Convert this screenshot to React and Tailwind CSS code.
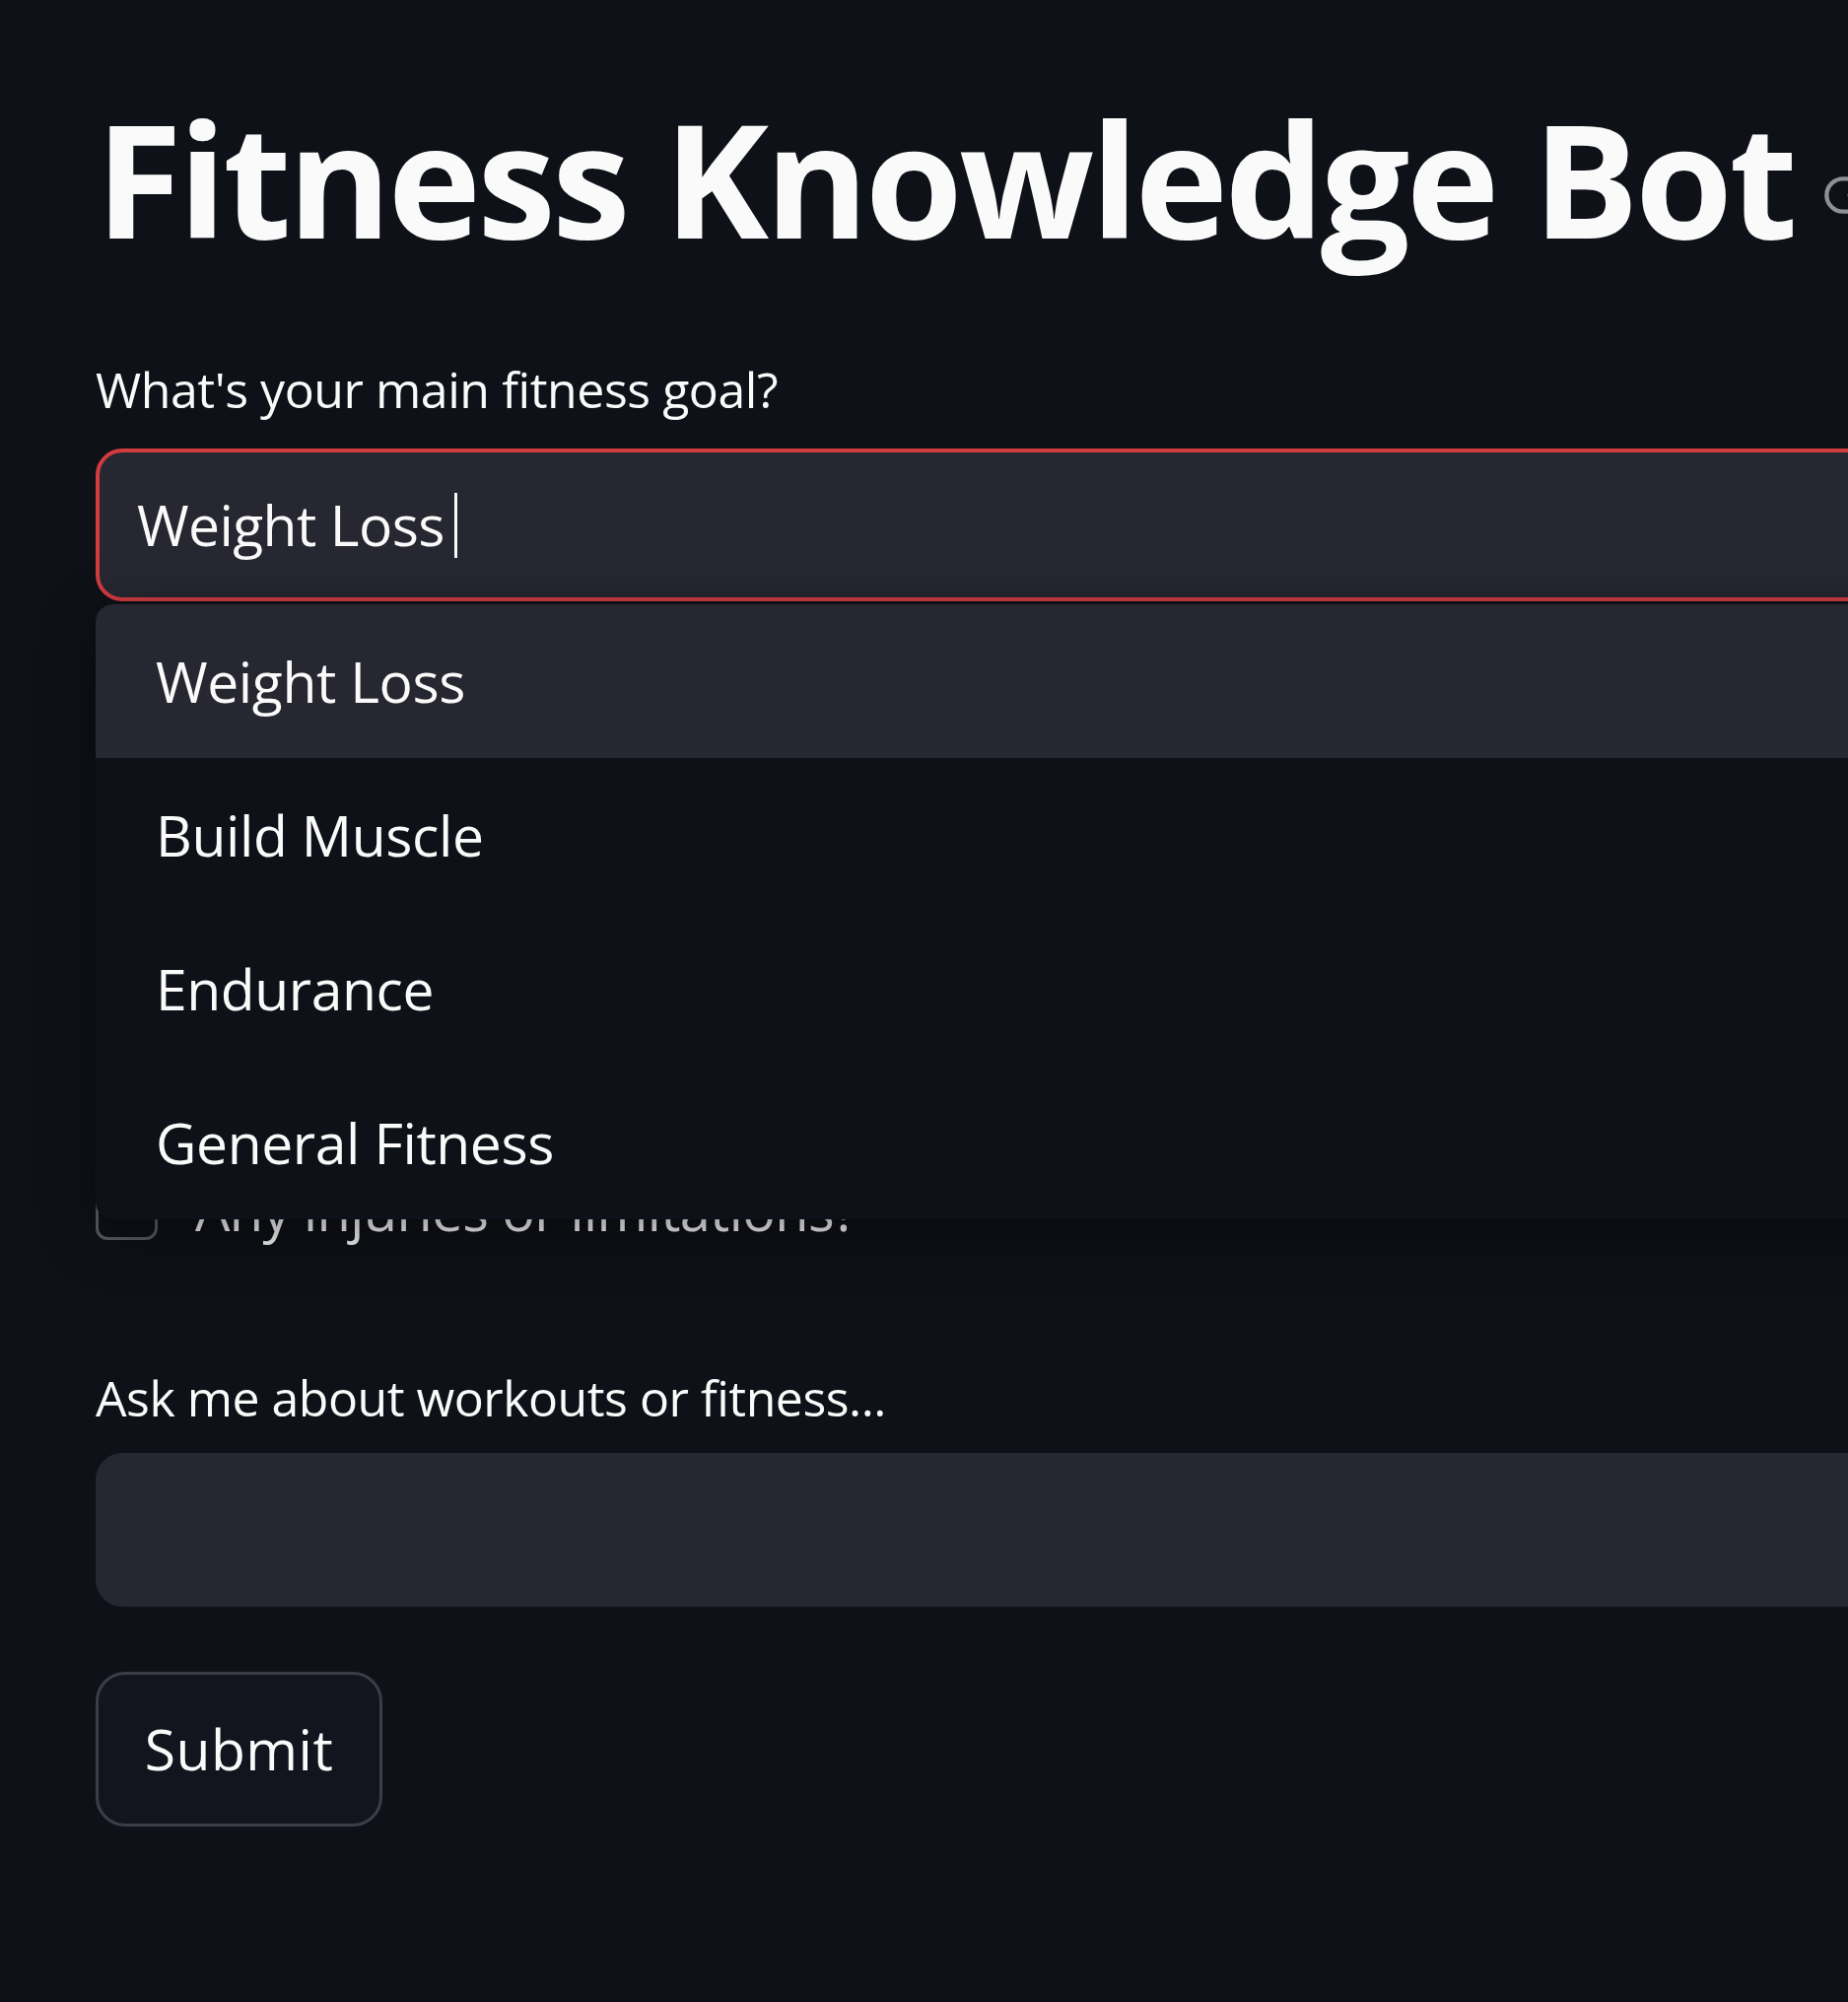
import React from "react";

function LinkIcon() {
  return (
    <svg
      width="80"
      height="80"
      viewBox="0 0 24 24"
      fill="none"
      stroke="#8d9097"
      strokeWidth="1.3"
      strokeLinecap="round"
      strokeLinejoin="round"
      className="shrink-0 ml-[30px] mt-[36px]"
    >
      <path d="M15 7h3a5 5 0 0 1 5 5 5 5 0 0 1-5 5h-3m-6 0H6a5 5 0 0 1-5-5 5 5 0 0 1 5-5h3" />
      <line x1="8" y1="12" x2="16" y2="12" />
    </svg>
  );
}

const options = ["Weight Loss", "Build Muscle", "Endurance", "General Fitness"];

export default function App() {
  return (
    <div className="relative w-[1875px] h-[2031px] overflow-hidden bg-[#0e1117] text-[#fafafa] font-medium font-['Open_Sans','Noto_Sans',sans-serif]">
      <div className="w-[2300px] pl-[97px] flex flex-col">
        {/* Title */}
        <div className="mt-[99px] h-[161px] flex items-center">
          <h1 className="text-[160px] leading-none font-bold tracking-[-3.7px] whitespace-nowrap">
            Fitness Knowledge Bot
          </h1>
          <LinkIcon />
        </div>

        {/* Goal select */}
        <label className="mt-[110px] h-[50px] text-[50px] leading-none tracking-[-0.45px] whitespace-nowrap">
          What's your main fitness goal?
        </label>
        <div className="relative mt-[35px]">
          <div className="h-[155px] rounded-[27px] border-[4px] border-[#d23b40] bg-[#262730] flex items-center pl-[38px]">
            <span className="text-[57px] leading-none tracking-[-0.6px] whitespace-nowrap">Weight Loss</span>
            <span className="ml-[10px] w-[3px] h-[66px] bg-[#fafafa]" />
          </div>

          {/* Dropdown menu */}
          <div className="absolute z-10 top-[158px] left-0 right-0 rounded-[18px] overflow-hidden bg-[#0e1117] shadow-[0_15px_60px_rgba(0,0,0,0.45)]">
            {options.map((o, i) => (
              <div
                key={o}
                className={
                  i === 0
                    ? "h-[156px] flex items-center pl-[61px] bg-[#262730]"
                    : "h-[156px] flex items-center pl-[61px]"
                }
              >
                <span className="text-[57px] leading-none tracking-[-0.4px] whitespace-nowrap">{o}</span>
              </div>
            ))}
          </div>
        </div>

        {/* Hidden area under dropdown */}
        <div className="h-[586px]" />

        {/* Checkbox */}
        <div className="h-[62px] flex items-center gap-[38px]">
          <div className="w-[63px] h-[62px] rounded-[12px] border-[3px] border-[#5a5d65]" />
          <span className="text-[56px] leading-none tracking-[-0.6px] whitespace-nowrap">
            Any injuries or limitations?
          </span>
        </div>

        {/* Question */}
        <label className="mt-[135px] h-[50px] text-[50px] leading-none tracking-[-0.5px] whitespace-nowrap">
          Ask me about workouts or fitness...
        </label>
        <div className="mt-[31px] h-[156px] rounded-[27px] bg-[#262730]" />

        {/* Submit */}
        <div className="mt-[66px]">
          <button className="w-[291px] h-[157px] rounded-[30px] border-[3px] border-[#3b3e46] bg-[#12151d] flex items-center justify-center">
            <span className="text-[57px] leading-none tracking-[0.5px]">Submit</span>
          </button>
        </div>
      </div>
    </div>
  );
}
